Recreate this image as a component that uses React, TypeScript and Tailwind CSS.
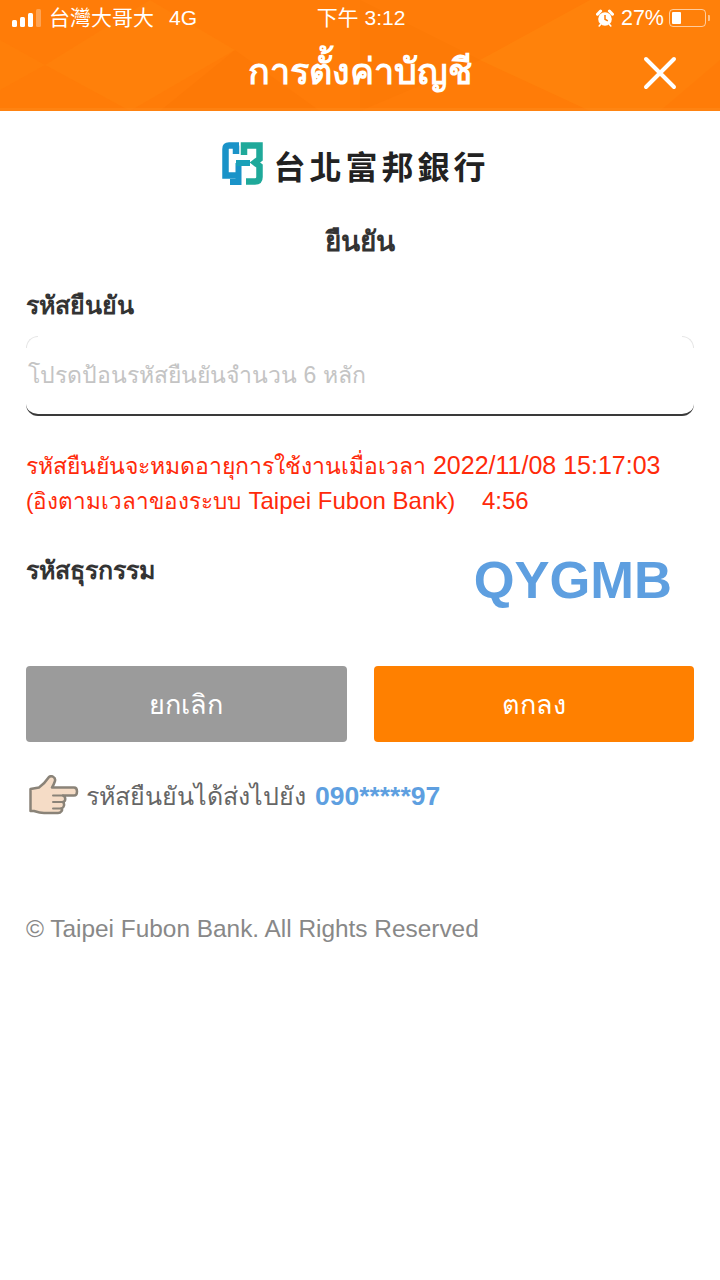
const FONT = "font-['Liberation_Sans','Noto_Sans_CJK_TC',sans-serif]";

function SignalBars() {
  return (
    <div className="flex items-end gap-[3px] h-[18px]">
      <div className="w-[5px] h-[7px] rounded-[1.5px] bg-white" />
      <div className="w-[5px] h-[10px] rounded-[1.5px] bg-white" />
      <div className="w-[5px] h-[14px] rounded-[1.5px] bg-white" />
      <div className="w-[5px] h-[18px] rounded-[1.5px] bg-white/30" />
    </div>
  );
}

function AlarmIcon() {
  return (
    <svg width="18" height="18" viewBox="0 0 18 18" fill="none">
      <circle cx="9" cy="10" r="6.800" fill="white" />
      <path d="M9 6V10.200L11.800 11.800" stroke="#ff7e08" strokeWidth="1.500" />
      <path d="M1.500 5.200L4.600 2M16.500 5.200L13.400 2" stroke="white" strokeWidth="3" strokeLinecap="round" />
      <path d="M4.500 15.500L3.200 17M13.500 15.500L14.800 17" stroke="white" strokeWidth="1.600" strokeLinecap="round" />
    </svg>
  );
}

function Battery() {
  return (
    <div className="flex items-center gap-[2px]">
      <div className="w-[37px] h-[18px] rounded-[4px] border border-white/60 p-[2px]">
        <div className="w-[9px] h-full rounded-[1px] bg-white" />
      </div>
      <div className="w-[2px] h-[6px] rounded-r-[1px] bg-white/50" />
    </div>
  );
}

function HeaderTexture() {
  return (
    <svg className="absolute inset-0" width="720" height="111" viewBox="0 0 720 111">
      <polygon points="0,40 45,65 0,90" fill="#ff8a10" fillOpacity="0.2" />
      <polygon points="45,65 150,0 235,50 130,111" fill="#ff8a10" fillOpacity="0.25" />
      <polygon points="235,50 320,111 160,111" fill="#f56f00" fillOpacity="0.2" />
      <polygon points="480,60 590,0 590,111" fill="#ff9012" fillOpacity="0.35" />
      <polygon points="360,0 480,60 360,111" fill="#f87200" fillOpacity="0.25" />
      <polygon points="590,0 720,0 720,60 660,111 590,111" fill="#ff8a10" fillOpacity="0.25" />
      <rect x="0" y="108" width="720" height="3" fill="#ff8a1a" fillOpacity="0.5" />
    </svg>
  );
}

function StatusBar() {
  return (
    <div className="relative grid grid-cols-3 items-center h-[36px] pl-[12px] pr-[10px] text-[21px] text-white">
      <div className="flex items-center">
        <SignalBars />
        <span className="ml-[8px] whitespace-nowrap">台灣大哥大</span>
        <span className="ml-[15px]">4G</span>
      </div>
      <div className="text-center whitespace-nowrap">下午 3:12</div>
      <div className="flex items-center justify-end">
        <AlarmIcon />
        <span className="ml-[7px] mr-[5px] text-[21.500px]">27%</span>
        <Battery />
      </div>
    </div>
  );
}

function BankLogo() {
  return (
    <div className="flex items-end justify-center gap-[10px] h-[46px] pr-[8px]">
      <svg width="41" height="43" viewBox="0 0 41 43" fill="none">
        <path d="M17 3.500H7Q3.500 3.500 3.500 7V33.500H14" stroke="#1a93c8" strokeWidth="6.500" />
        <path d="M14 3.500V12" stroke="#1a93c8" strokeWidth="6.500" />
        <path d="M16.500 21V40H8" stroke="#1a93c8" strokeWidth="6" />
        <path d="M14 21H28" stroke="#1aa0b8" strokeWidth="6" />
        <path d="M22 13V3.500H37.500V17L33 20.500L37.500 24V35Q37.500 39.500 33 39.500H24" stroke="#1fa99a" strokeWidth="6.500" />
      </svg>
      <span className="text-[32px] leading-[34px] font-bold tracking-[4px] text-[#222] whitespace-nowrap">台北富邦銀行</span>
    </div>
  );
}

function PointingHand() {
  return (
    <svg width="52" height="44" viewBox="0 0 52 44" fill="none">
      <path
        d="M3.500 14L12 12.500C16 9.500 20 5 22 2C24 0 29 2 28 6C27 9 26 11 25 12.500H47C51 12.500 51 20.500 47 20.500H36C39 22 39 26 36 27C38 29 37 33 34.500 33.500C36 35 34 38 31 38H17C13 38 10 37 7 36L3.500 36Z"
        fill="#f5dcc6"
        stroke="#8a8378"
        strokeWidth="2.500"
        strokeLinejoin="round"
      />
      <path d="M26 20.500H36M26 27H36M26 33.500H34" stroke="#8a8378" strokeWidth="2" strokeLinecap="round" />
    </svg>
  );
}

export default function App() {
  return (
    <div className={`${FONT} w-[720px] min-h-[1280px] bg-white`}>
      <header className="relative h-[111px] bg-[#ff7c08] overflow-hidden">
        <HeaderTexture />
        <StatusBar />
        <div className="relative flex items-center justify-center h-[75px] pb-[3px]">
          <h1 className="text-[36px] font-bold text-white leading-none">การตั้งค่าบัญชี</h1>
          <svg className="absolute right-[43px] top-[20px]" width="34" height="34" viewBox="0 0 34 34" fill="none">
            <path d="M3 3L31 31M31 3L3 31" stroke="white" strokeWidth="4" strokeLinecap="round" />
          </svg>
        </div>
      </header>

      <main className="px-[26px]">
        <div className="pt-[28px]">
          <BankLogo />
        </div>
        <h2 className="mt-[37px] text-center text-[28px] leading-[40px] font-bold text-[#333]">ยืนยัน</h2>
        <label className="block mt-[25px] text-[25px] leading-[36px] font-bold text-[#333]">รหัสยืนยัน</label>
        <div className="relative mt-[13px] h-[80px] rounded-[12px] border-b-2 border-[#3a3a3a] flex items-center px-[2px]">
          <div className="absolute left-0 top-0 w-[12px] h-[12px] rounded-tl-[12px] border-l border-t border-[#e6e6e6]" />
          <div className="absolute right-0 top-0 w-[12px] h-[12px] rounded-tr-[12px] border-r border-t border-[#e6e6e6]" />
          <span className="text-[23px] text-[#c4c4c4]">โปรดป้อนรหัสยืนยันจำนวน 6 หลัก</span>
        </div>

        <div className="mt-[31px] text-[25px] leading-[36px] text-[#ff2a0a]">
          <p className="whitespace-nowrap">
            <span className="text-[23px]">รหัสยืนยันจะหมดอายุการใช้งานเมื่อเวลา</span> 2022/11/08 15:17:03
          </p>
          <p className="-mt-[2px] whitespace-pre">
            <span className="text-[22.500px]">(อิงตามเวลาของระบบ</span> <span className="text-[24px]">Taipei Fubon Bank)    4:56</span>
          </p>
        </div>

        <div className="mt-[30px] flex items-start justify-between">
          <span className="pt-[2px] text-[25px] leading-[36px] font-bold text-[#333]">รหัสธุรกรรม</span>
          <span className="mr-[22px] text-[52.500px] leading-[60px] font-bold text-[#5e9fe0]">QYGMB</span>
        </div>

        <div className="mt-[56px] grid grid-cols-2 gap-[27px]">
          <button className="h-[76px] pt-[3px] rounded-[4px] bg-[#9b9b9b] text-[27px] text-white">ยกเลิก</button>
          <button className="h-[76px] pt-[3px] rounded-[4px] bg-[#ff8000] text-[27px] text-white">ตกลง</button>
        </div>

        <div className="mt-[33px] flex items-center gap-[7px] pl-[1px]">
          <PointingHand />
          <span className="text-[25px] text-[#666]">
            รหัสยืนยันได้ส่งไปยัง <span className="ml-[2px] text-[26.500px] font-bold text-[#5e9fe0]">090*****97</span>
          </span>
        </div>

        <p className="mt-[92px] text-[24.400px] leading-[36px] text-[#888]">© Taipei Fubon Bank. All Rights Reserved</p>
      </main>
    </div>
  );
}
